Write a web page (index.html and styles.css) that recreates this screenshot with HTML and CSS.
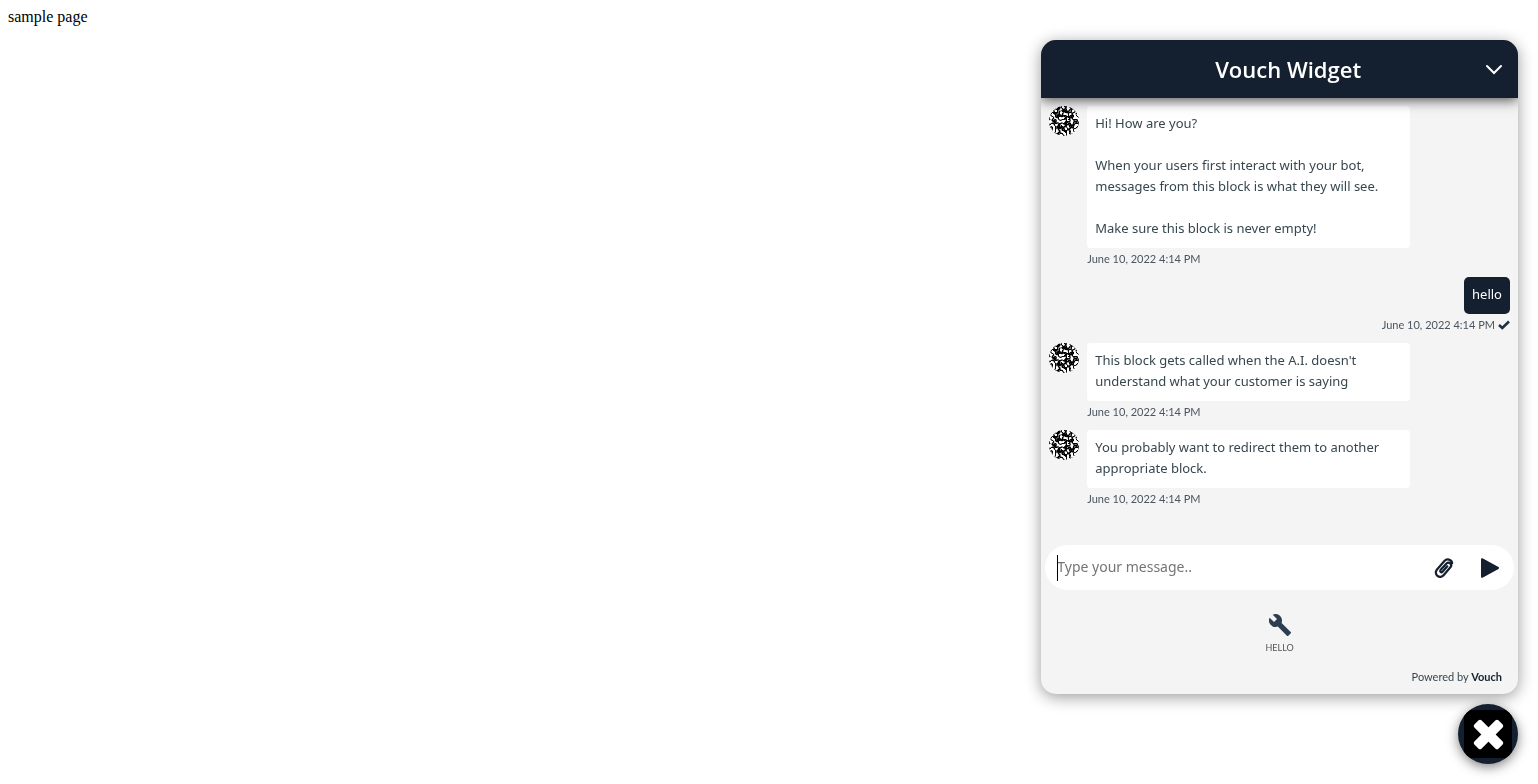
FILE: index.html
```html
<!DOCTYPE html>
<html lang="en">
<head>
<meta charset="utf-8">
<title>sample page</title>
<link rel="stylesheet" href="styles.css">
</head>
<body>
sample page
<svg class="defs" aria-hidden="true">
  <defs>
    <filter id="speckle" x="0" y="0" width="100%" height="100%" color-interpolation-filters="sRGB">
      <feTurbulence type="turbulence" baseFrequency="0.28" numOctaves="1" seed="7"/>
      <feColorMatrix values="6 0 0 0 -.45  6 0 0 0 -.45  6 0 0 0 -.45  0 0 0 0 1"/>
    </filter>
    <clipPath id="round"><circle cx="15" cy="15" r="15"/></clipPath>
    <symbol id="avatar" viewBox="0 0 30 30">
      <g clip-path="url(#round)"><rect width="30" height="30" filter="url(#speckle)"/></g>
    </symbol>
  </defs>
</svg>
<div class="dock">
  <section class="widget" aria-label="Vouch Widget">
    <header class="header">
      <h1 class="title">Vouch Widget</h1>
      <button class="collapse" aria-label="Minimize">
        <svg width="18" height="12" viewBox="0 0 18 12"><path d="M2 3l7 7 7-7" fill="none" stroke="#fff" stroke-width="2" stroke-linecap="round"/></svg>
      </button>
    </header>
    <div class="messages">
      <article class="message">
        <svg class="avatar"><use href="#avatar"/></svg>
        <div class="content">
          <div class="bubble">Hi! How are you?<br><br>When your users first interact with your bot,<br>messages from this block is what they will see.<br><br>Make sure this block is never empty!</div>
          <time class="time">June 10, 2022 4:14 PM</time>
        </div>
      </article>
      <article class="message message-own">
        <div class="bubble bubble-own">hello</div>
        <time class="time">June 10, 2022 4:14 PM
          <svg width="12" height="10" viewBox="0 0 12 10"><path d="M1 5l3.300 3L11 1.500" fill="none" stroke="#203040" stroke-width="2.500"/></svg>
        </time>
      </article>
      <article class="message">
        <svg class="avatar"><use href="#avatar"/></svg>
        <div class="content">
          <div class="bubble">This block gets called when the A.I. doesn't<br>understand what your customer is saying</div>
          <time class="time">June 10, 2022 4:14 PM</time>
        </div>
      </article>
      <article class="message">
        <svg class="avatar"><use href="#avatar"/></svg>
        <div class="content">
          <div class="bubble">You probably want to redirect them to another<br>appropriate block.</div>
          <time class="time">June 10, 2022 4:14 PM</time>
        </div>
      </article>
    </div>
    <form class="composer">
      <span class="caret"></span>
      <input class="field" type="text" placeholder="Type your message.." aria-label="Type your message">
      <button class="tool" type="button" aria-label="Attach file">
        <svg width="20" height="22" viewBox="0 0 20 22"><path d="M13.300 8.300L8.500 13.800a1.300 1.300 0 0 1-2-1.700l6-6.600a2.700 2.700 0 0 1 4.100 3.500l-7 8.300a4.400 4.400 0 0 1-6.800-5.600l7.600-8.700a4.500 4.500 0 0 1 7.800 2.200" transform="translate(0 1)" fill="none" stroke="#142030" stroke-width="2.200" stroke-linecap="round"/></svg>
      </button>
      <button class="tool" type="button" aria-label="Send">
        <svg width="20" height="22" viewBox="0 0 20 22"><path d="M2 2.200L18 11 2 19.800z" fill="#142030" stroke="#142030" stroke-width="2" stroke-linejoin="round"/></svg>
      </button>
    </form>
    <nav class="menu">
      <button class="menu-item">
        <svg width="24" height="24" viewBox="0 0 24 24"><path fill="#2c3e50" d="M22.700 19l-9.100-9.100c.9-2.300.4-5-1.500-6.900-2-2-5-2.400-7.400-1.300L9 6 6 9 1.600 4.700C.4 7.100.9 10.100 2.900 12.100c1.900 1.900 4.600 2.400 6.900 1.500l9.100 9.100c.4.4 1 .4 1.400 0l2.300-2.300c.5-.4.5-1.100.1-1.400z"/></svg>
        <span>HELLO</span>
      </button>
    </nav>
    <footer class="footer">Powered by <a class="brand" href="#">Vouch</a></footer>
  </section>
  <button class="launcher" aria-label="Close chat">
    <svg width="48" height="48" viewBox="0 0 48 48"><path fill="#000" d="M0 0h48v48H0z"/><g transform="translate(24.500 24.500) rotate(45)" fill="#fff"><rect x="-17" y="-5" width="34" height="10" rx="2"/><rect x="-5" y="-17" width="10" height="34" rx="2"/></g></svg>
  </button>
</div>
</body>
</html>
```
FILE: styles.css
```css
body {
  background: #fff;
  color: #000;
  font-family: "Liberation Serif", serif;
  font-size: 16px;
}
button {
  border: 0;
  padding: 0;
  background: none;
  font: inherit;
  color: inherit;
  cursor: pointer;
}
svg { display: block; }
.defs {
  position: absolute;
  width: 0;
  height: 0;
}
.dock {
  position: fixed;
  top: 40px;
  right: 20px;
  bottom: 20px;
  width: 31vw;
  min-width: 320px;
  display: flex;
  flex-direction: column;
  align-items: flex-end;
  gap: 10px;
  font-family: "Noto Sans", sans-serif;
}
.widget {
  flex: 1;
  min-height: 0;
  width: 100%;
  display: flex;
  flex-direction: column;
  background: #f4f4f4;
  border-radius: 15px;
  box-shadow: 0 3px 16px rgba(0, 0, 0, .4);
  overflow: hidden;
}
.header {
  flex: none;
  display: flex;
  align-items: center;
  padding: 12px 15px 12px 50px;
  background: #142030;
  color: #fff;
  box-shadow: 0 2px 12px rgba(0, 0, 0, .7);
  z-index: 1;
}
.title {
  flex: 1;
  margin: 0;
  font: 600 22px/34px "Open Sans", sans-serif;
  text-align: center;
}
.messages {
  flex: 1;
  min-height: 0;
  overflow: hidden;
  padding: 8px;
  display: flex;
  flex-direction: column;
  gap: 8px;
}
.message {
  flex: none;
  display: flex;
  gap: 8px;
}
.avatar {
  flex: none;
  width: 30px;
  height: 30px;
}
.content { width: 70%; }
.bubble {
  padding: 7px 8px 9px;
  border-radius: 4px;
  background: #fff;
  color: #37474f;
  font-size: 13px;
  line-height: 21px;
}
.message-own {
  flex-direction: column;
  align-items: flex-end;
  gap: 0;
}
.bubble-own {
  background: #142030;
  color: #fff;
  border-radius: 5px;
}
.time {
  display: flex;
  align-items: center;
  gap: 3px;
  color: #4a5560;
  font: 11px/21px Lato, sans-serif;
}
.composer {
  flex: none;
  position: relative;
  display: flex;
  align-items: center;
  gap: 26px;
  margin: 0 4px;
  padding: 0 14px 0 12px;
  background: #fff;
  border-radius: 23px;
}
.caret {
  position: absolute;
  left: 12px;
  top: 10px;
  bottom: 9px;
  width: 1px;
  background: #000;
}
.field {
  flex: 1;
  min-width: 0;
  height: 45px;
  box-sizing: border-box;
  padding: 0 0 3px;
  border: 0;
  outline: 0;
  background: none;
  font: 14px "Noto Sans", sans-serif;
}
.field::placeholder { color: #757575; }
.menu {
  flex: none;
  display: flex;
  justify-content: center;
  padding: 23px 0 11px;
}
.menu-item {
  display: flex;
  flex-direction: column;
  align-items: center;
  gap: 4px;
  color: #555;
  font: 9px/14px Lato, sans-serif;
}
.footer {
  flex: none;
  padding: 2px 16px 9px;
  text-align: right;
  color: #37474f;
  font: 11px/17px Lato, sans-serif;
}
.brand {
  color: #142030;
  font-weight: 700;
  text-decoration: none;
}
.launcher {
  flex: none;
  width: 60px;
  height: 60px;
  display: grid;
  place-items: center;
  overflow: hidden;
  border-radius: 50%;
  background: #142030;
  box-shadow: 0 3px 12px rgba(0, 0, 0, .5);
}
```
